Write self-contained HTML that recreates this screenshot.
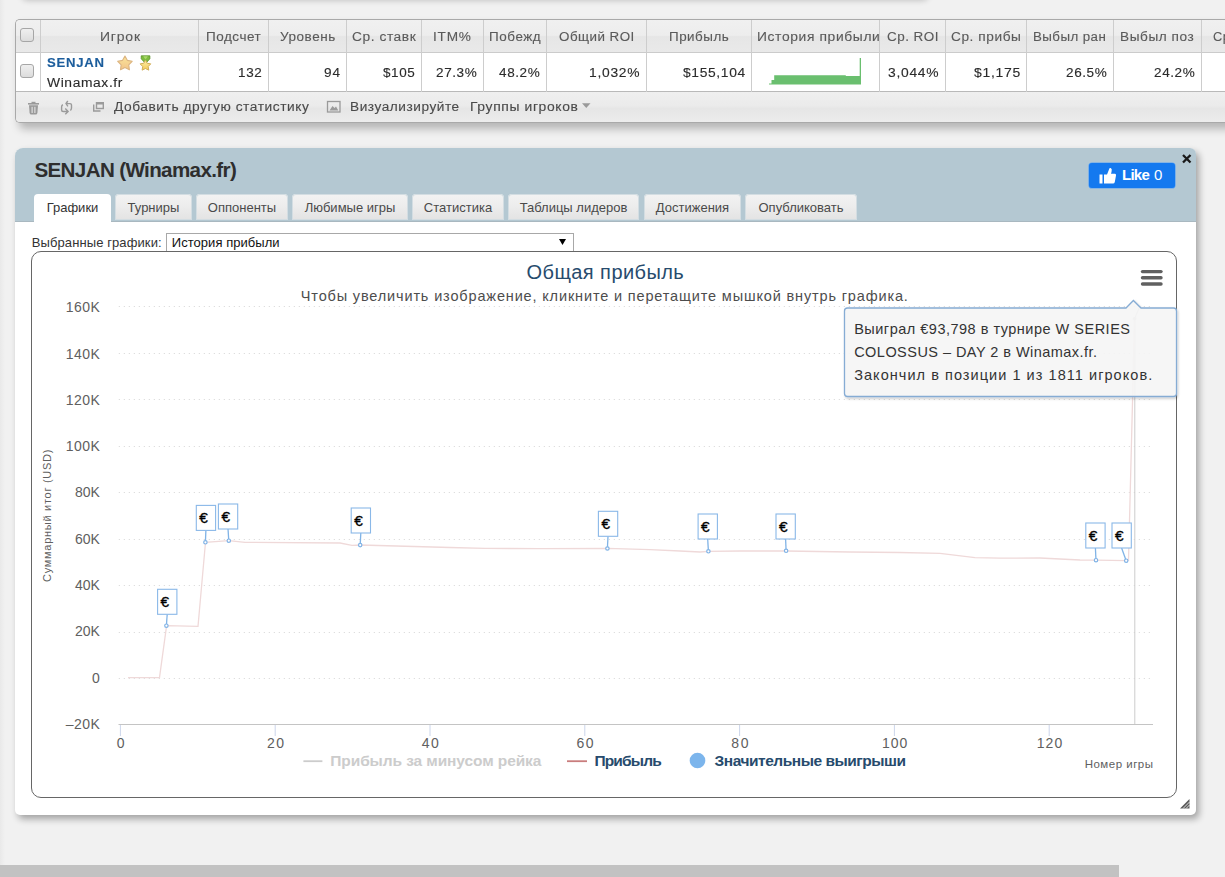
<!DOCTYPE html>
<html><head><meta charset="utf-8"><title>SENJAN (Winamax.fr)</title>
<style>
html,body{margin:0;padding:0}
body{width:1225px;height:877px;overflow:hidden;position:relative;background:#f1f1f1;font-family:"Liberation Sans",sans-serif}
.abs{position:absolute}
.t{position:absolute;white-space:pre}
#lstrip{left:0;top:0;width:5px;height:877px;background:linear-gradient(90deg,#e9e9e9,#f1f1f1)}
#topbox{left:21px;top:-30px;width:906px;height:28px;background:#f1f1f1;border-radius:0 0 5px 5px;box-shadow:1px 2px 6px rgba(0,0,0,.24)}
#tbl{left:15px;top:19px;width:1230px;height:102px;border:1px solid #a9a9a9;border-right:0;border-radius:5px 0 0 5px;background:#ececec;box-shadow:4px 6px 8px rgba(0,0,0,.25);overflow:hidden}
#thead{left:0;top:0;width:100%;height:32px;background:linear-gradient(#f0f0f0 0%,#ededed 48%,#e6e6e6 52%,#e9e9e9 100%);border-bottom:1px solid #cbcbcb}
#tbody{left:0;top:33px;width:100%;height:38px;background:#fff;border-bottom:1px solid #b9b9b9}
#tbar{left:0;top:72px;width:100%;height:30px;background:linear-gradient(#efefef 0%,#ebebeb 45%,#e6e6e6 55%,#ececec 100%)}
.vd{position:absolute;top:0;width:1px;height:72px;background:#cdcdcd}
.cb{position:absolute;width:12px;height:12px;border:1px solid #a6a6a6;border-radius:3px;background:linear-gradient(#efefef,#dcdcdc)}
#panel{left:15px;top:148px;width:1181px;height:667px;background:#fff;border-radius:8px 6px 5px 5px;box-shadow:3px 4px 7px rgba(0,0,0,.33)}
#phead{left:0;top:0;width:1181px;height:74px;background:#b4c8d2;border-radius:8px 6px 0 0;box-shadow:inset 0 -1px 0 #a9b8c0}
.tab{position:absolute;top:193.5px;height:26.5px;border-radius:4px 4px 0 0;background:linear-gradient(#f3f3f3 0%,#ececec 50%,#e3e3e3 100%);box-shadow:inset 0 0 0 1px #d3dde2}
.tab.on{background:#fff;height:28.5px;box-shadow:none}
#sel{left:166px;top:233px;width:408px;height:18px;border:1px solid #a8a8a8;border-bottom:0;background:#fff;box-sizing:border-box}
#chartbox{left:30.8px;top:251px;width:1146.4px;height:547px;border:1.8px solid #666;border-radius:10px;box-sizing:border-box;background:#fff}
#likebtn{left:1089px;top:163px;width:86px;height:25px;background:#1479ef;border-radius:3px;box-shadow:0 0 0 0.6px #5aa2f5}
#botbar{left:0;top:865px;width:1119px;height:12px;background:#c2c2c2}
</style></head><body>
<div id="lstrip" class="abs"></div>
<div id="topbox" class="abs"></div>
<div id="tbl" class="abs">
  <div id="thead" class="abs"></div>
  <div id="tbody" class="abs"></div>
  <div id="tbar" class="abs"></div>
  <div class="vd" style="left:24px"></div><div class="vd" style="left:182px"></div><div class="vd" style="left:252px"></div><div class="vd" style="left:330px"></div><div class="vd" style="left:405px"></div><div class="vd" style="left:467px"></div><div class="vd" style="left:530px"></div><div class="vd" style="left:630px"></div><div class="vd" style="left:735px"></div><div class="vd" style="left:863px"></div><div class="vd" style="left:929px"></div><div class="vd" style="left:1010px"></div><div class="vd" style="left:1097px"></div><div class="vd" style="left:1185px"></div>
  <div class="cb" style="left:4px;top:8px"></div>
  <div class="cb" style="left:4px;top:44px"></div>
</div>
<svg class="abs" width="1225" height="140" style="left:0;top:0">
  <!-- sparkline -->
  <path d="M769,84.5 L769,83.5 L771.5,83.5 L771.5,80 L774.2,80 L774.2,75.2 L845.8,75.2 L845.8,76.1 L859.7,76.1 L859.7,58.1 L861,58.1 L861,84.5 Z" fill="#6abf6f"/>
  <!-- stars -->
  <defs><linearGradient id="sg1" x1="0" y1="0" x2="0" y2="1"><stop offset="0" stop-color="#fbe59a"/><stop offset="1" stop-color="#f2c489"/></linearGradient>
  <linearGradient id="sg2" x1="0" y1="0" x2="0" y2="1"><stop offset="0" stop-color="#fdf0a8"/><stop offset="1" stop-color="#f3c95a"/></linearGradient></defs>
  <polygon points="124.95,56.00 127.30,60.36 132.18,61.25 128.75,64.84 129.42,69.75 124.95,67.60 120.48,69.75 121.15,64.84 117.72,61.25 122.60,60.36" fill="url(#sg1)" stroke="#dcb582" stroke-width="1.1" stroke-linejoin="round"/>
  <path d="M141.2,55.8 L149.9,55.8 L149.9,58.8 L146.5,62.5 L144.6,62.5 L141.2,58.8 Z" fill="#7cbc3e" stroke="#4f8a1e" stroke-width="0.7" stroke-linejoin="round"/><path d="M143.2,56.2 L147.9,56.2 L145.55,59.5 Z" fill="#a8d86a"/>
  <polygon points="145.45,60.00 147.15,63.25 150.78,63.87 148.21,66.50 148.74,70.13 145.45,68.50 142.16,70.13 142.69,66.50 140.12,63.87 143.75,63.25" fill="url(#sg2)" stroke="#d2ae5a" stroke-width="1" stroke-linejoin="round"/>
  <!-- toolbar icons -->
  <g fill="#9a9a9a">
    <rect x="28" y="103" width="11" height="1.6"/>
    <rect x="31.5" y="101.8" width="4" height="1.6"/>
    <path d="M29,105.3 L38,105.3 L37.4,113 Q37.2,114.6 35.6,114.6 L31.4,114.6 Q29.8,114.6 29.6,113 Z"/>
  </g>
  <g stroke="#ececec" stroke-width="1"><line x1="32.1" y1="106.8" x2="32.1" y2="113"/><line x1="34.9" y1="106.8" x2="34.9" y2="113"/></g>
  <g fill="none" stroke="#9a9a9a" stroke-width="1.4">
    <path d="M62.8,104.6 Q61.6,105.6 61.6,107 L61.6,110 Q61.6,111.5 63.1,111.5 L67.6,111.5 M65.3,108.6 L68.1,111.5 L65.3,114.3"/>
    <path d="M70.4,110.4 Q71.5,109.4 71.5,108 L71.5,105 Q71.5,103.6 70,103.6 L66.2,103.6 M67.8,101 L66,103.6 L67.9,106.3"/>
  </g>
  <g fill="none" stroke="#9a9a9a" stroke-width="1.4">
    <path d="M93.7,104.5 L93.7,111 L100.5,111"/>
    <rect x="96.5" y="102.7" width="6.8" height="5.8"/>
  </g>
  <rect x="96.5" y="102.5" width="7" height="2" fill="#9a9a9a"/>
  <rect x="327.5" y="101.5" width="12.5" height="10.5" fill="none" stroke="#9a9a9a" stroke-width="1.3"/>
  <path d="M329.5,110.5 L332.5,106 L334.5,108 L336,106.5 L338.3,110.5 Z" fill="#9a9a9a"/>
  <path d="M582,103.3 L590.5,103.3 L586.25,108 Z" fill="#9a9a9a"/>
</svg>
<div id="panel" class="abs">
  <div id="phead" class="abs"></div>
</div>
<div class="abs tab on" style="left:34px;width:77px"></div><div class="abs tab" style="left:115px;width:77px"></div><div class="abs tab" style="left:196px;width:92px"></div><div class="abs tab" style="left:292px;width:116px"></div><div class="abs tab" style="left:412px;width:92px"></div><div class="abs tab" style="left:508px;width:131px"></div><div class="abs tab" style="left:644px;width:97px"></div><div class="abs tab" style="left:745px;width:112px"></div>
<div id="sel" class="abs"></div>
<div id="chartbox" class="abs"></div>
<div id="likebtn" class="abs"></div>
<svg class="abs" width="1225" height="877" style="left:0;top:0">
  <path d="M1183,155 L1190.5,162.5 M1190.5,155 L1183,162.5" stroke="#1a1a1a" stroke-width="2.3"/>
  <path d="M559,239 L566,239 L562.5,245 Z" fill="#000"/>
  <!-- like thumb -->
  <path d="M1099.5,174.5 L1102.5,174.5 L1102.5,183.5 L1099.5,183.5 Z M1104,174.5 L1107,174.5 L1109,169.5 Q1109.5,167.5 1111,168.3 Q1112.3,169 1111.5,172 L1111,173.8 L1115,173.8 Q1116.3,174 1116,175.5 L1114.8,182 Q1114.5,183.5 1113,183.5 L1104,183.5 Z" fill="#fff"/>
  <!-- resize handle -->
  <path d="M1180,808.5 L1189.5,799 L1189.5,808.5 Z" fill="#5a5a5a"/>
  <g stroke="#fff" stroke-width="0.8"><line x1="1183" y1="808.5" x2="1189.5" y2="802"/><line x1="1186" y1="808.5" x2="1189.5" y2="805"/></g>
  <line x1="118.8" y1="306.5" x2="1150" y2="306.5" stroke="#d6d6d6" stroke-width="1" stroke-dasharray="1,4"/>
<line x1="118.8" y1="353.5" x2="1150" y2="353.5" stroke="#d6d6d6" stroke-width="1" stroke-dasharray="1,4"/>
<line x1="118.8" y1="399.5" x2="1150" y2="399.5" stroke="#d6d6d6" stroke-width="1" stroke-dasharray="1,4"/>
<line x1="118.8" y1="446.5" x2="1150" y2="446.5" stroke="#d6d6d6" stroke-width="1" stroke-dasharray="1,4"/>
<line x1="118.8" y1="492.5" x2="1150" y2="492.5" stroke="#d6d6d6" stroke-width="1" stroke-dasharray="1,4"/>
<line x1="118.8" y1="539.5" x2="1150" y2="539.5" stroke="#d6d6d6" stroke-width="1" stroke-dasharray="1,4"/>
<line x1="118.8" y1="585.5" x2="1150" y2="585.5" stroke="#d6d6d6" stroke-width="1" stroke-dasharray="1,4"/>
<line x1="118.8" y1="632.5" x2="1150" y2="632.5" stroke="#d6d6d6" stroke-width="1" stroke-dasharray="1,4"/>
<line x1="118.8" y1="678.5" x2="1150" y2="678.5" stroke="#d6d6d6" stroke-width="1" stroke-dasharray="1,4"/>
<line x1="118.5" y1="724.5" x2="1153" y2="724.5" stroke="#c4c4c4" stroke-width="1"/>
<line x1="120.4" y1="725" x2="120.4" y2="736" stroke="#ccd6eb" stroke-width="1"/>
<line x1="275.2" y1="725" x2="275.2" y2="736" stroke="#ccd6eb" stroke-width="1"/>
<line x1="430.0" y1="725" x2="430.0" y2="736" stroke="#ccd6eb" stroke-width="1"/>
<line x1="584.8" y1="725" x2="584.8" y2="736" stroke="#ccd6eb" stroke-width="1"/>
<line x1="739.6" y1="725" x2="739.6" y2="736" stroke="#ccd6eb" stroke-width="1"/>
<line x1="894.4" y1="725" x2="894.4" y2="736" stroke="#ccd6eb" stroke-width="1"/>
<line x1="1049.2" y1="725" x2="1049.2" y2="736" stroke="#ccd6eb" stroke-width="1"/>
<line x1="1134.8" y1="318" x2="1134.8" y2="724" stroke="#cccccc" stroke-width="1"/>
<polyline fill="none" stroke="#efd9d9" stroke-width="1.3" points="128.0,677.7 159.5,677.5 166.6,625.6 198.0,626.4 205.5,542.3 228.8,540.7 245.0,542.3 340.0,543.0 352.0,545.3 360.3,545.0 450.0,547.5 485.0,548.4 540.0,548.6 607.4,548.4 650.0,549.6 680.0,551.0 700.0,552.0 708.4,551.4 740.0,551.0 786.0,551.0 850.0,552.0 900.0,552.5 940.0,553.4 975.0,557.6 1000.0,558.2 1040.0,558.0 1080.0,560.0 1096.0,560.2 1126.4,560.7 1128.5,560.5 1134.6,318.7"/>
<line x1="167.2" y1="614.3" x2="166.4" y2="625.7" stroke="#80b3e6" stroke-width="1.3"/>
<circle cx="166.4" cy="625.7" r="1.7" fill="#fff" stroke="#80b3e6" stroke-width="1.2"/>
<rect x="157.6" y="589.3" width="19.3" height="25" fill="#fff" stroke="#8ab8e8" stroke-width="1.1"/>
<text x="160.6" y="606.9" font-family="Liberation Sans" font-weight="400" font-size="15.5" fill="#000" stroke="#000" stroke-width="0.35">€</text>
<line x1="205.9" y1="530.4" x2="205.4" y2="542.3" stroke="#80b3e6" stroke-width="1.3"/>
<circle cx="205.4" cy="542.3" r="1.7" fill="#fff" stroke="#80b3e6" stroke-width="1.2"/>
<rect x="196.3" y="505.4" width="19.3" height="25" fill="#fff" stroke="#8ab8e8" stroke-width="1.1"/>
<text x="199.3" y="523.0" font-family="Liberation Sans" font-weight="400" font-size="15.5" fill="#000" stroke="#000" stroke-width="0.35">€</text>
<line x1="228.0" y1="529.0" x2="228.8" y2="540.7" stroke="#80b3e6" stroke-width="1.3"/>
<circle cx="228.8" cy="540.7" r="1.7" fill="#fff" stroke="#80b3e6" stroke-width="1.2"/>
<rect x="218.4" y="504.0" width="19.3" height="25" fill="#fff" stroke="#8ab8e8" stroke-width="1.1"/>
<text x="221.4" y="521.6" font-family="Liberation Sans" font-weight="400" font-size="15.5" fill="#000" stroke="#000" stroke-width="0.35">€</text>
<line x1="360.8" y1="533.0" x2="360.2" y2="545.1" stroke="#80b3e6" stroke-width="1.3"/>
<circle cx="360.2" cy="545.1" r="1.7" fill="#fff" stroke="#80b3e6" stroke-width="1.2"/>
<rect x="351.2" y="508.0" width="19.3" height="25" fill="#fff" stroke="#8ab8e8" stroke-width="1.1"/>
<text x="354.2" y="525.6" font-family="Liberation Sans" font-weight="400" font-size="15.5" fill="#000" stroke="#000" stroke-width="0.35">€</text>
<line x1="608.0" y1="536.3" x2="607.4" y2="548.5" stroke="#80b3e6" stroke-width="1.3"/>
<circle cx="607.4" cy="548.5" r="1.7" fill="#fff" stroke="#80b3e6" stroke-width="1.2"/>
<rect x="598.4" y="511.3" width="19.3" height="25" fill="#fff" stroke="#8ab8e8" stroke-width="1.1"/>
<text x="601.4" y="528.9" font-family="Liberation Sans" font-weight="400" font-size="15.5" fill="#000" stroke="#000" stroke-width="0.35">€</text>
<line x1="707.7" y1="539.0" x2="708.4" y2="551.3" stroke="#80b3e6" stroke-width="1.3"/>
<circle cx="708.4" cy="551.3" r="1.7" fill="#fff" stroke="#80b3e6" stroke-width="1.2"/>
<rect x="698.1" y="514.0" width="19.3" height="25" fill="#fff" stroke="#8ab8e8" stroke-width="1.1"/>
<text x="701.1" y="531.6" font-family="Liberation Sans" font-weight="400" font-size="15.5" fill="#000" stroke="#000" stroke-width="0.35">€</text>
<line x1="785.6" y1="539.0" x2="786.1" y2="550.8" stroke="#80b3e6" stroke-width="1.3"/>
<circle cx="786.1" cy="550.8" r="1.7" fill="#fff" stroke="#80b3e6" stroke-width="1.2"/>
<rect x="776.0" y="514.0" width="19.3" height="25" fill="#fff" stroke="#8ab8e8" stroke-width="1.1"/>
<text x="779.0" y="531.6" font-family="Liberation Sans" font-weight="400" font-size="15.5" fill="#000" stroke="#000" stroke-width="0.35">€</text>
<line x1="1095.4" y1="548.0" x2="1096.0" y2="560.2" stroke="#80b3e6" stroke-width="1.3"/>
<circle cx="1096.0" cy="560.2" r="1.7" fill="#fff" stroke="#80b3e6" stroke-width="1.2"/>
<rect x="1085.8" y="523.0" width="19.3" height="25" fill="#fff" stroke="#8ab8e8" stroke-width="1.1"/>
<text x="1088.8" y="540.6" font-family="Liberation Sans" font-weight="400" font-size="15.5" fill="#000" stroke="#000" stroke-width="0.35">€</text>
<line x1="1121.6" y1="548.0" x2="1126.2" y2="560.7" stroke="#80b3e6" stroke-width="1.3"/>
<circle cx="1126.2" cy="560.7" r="1.7" fill="#fff" stroke="#80b3e6" stroke-width="1.2"/>
<rect x="1112.0" y="523.0" width="19.3" height="25" fill="#fff" stroke="#8ab8e8" stroke-width="1.1"/>
<text x="1115.0" y="540.6" font-family="Liberation Sans" font-weight="400" font-size="15.5" fill="#000" stroke="#000" stroke-width="0.35">€</text>
<line x1="1140" y1="306" x2="1134.6" y2="318.7" stroke="#c8c8c8" stroke-width="1"/>
<circle cx="1134.6" cy="318.7" r="1.8" fill="#c8c8c8"/>
<line x1="303.4" y1="761.2" x2="322.4" y2="761.2" stroke="#cccccc" stroke-width="1.8"/>
<line x1="567" y1="761.2" x2="587" y2="761.2" stroke="#c97d7d" stroke-width="1.8"/>
<circle cx="697.5" cy="760.5" r="7.8" fill="#7cb5ec"/>
<line x1="1142.5" y1="271.6" x2="1161" y2="271.6" stroke="#606060" stroke-width="3.4" stroke-linecap="round"/>
<line x1="1142.5" y1="277.8" x2="1161" y2="277.8" stroke="#606060" stroke-width="3.4" stroke-linecap="round"/>
<line x1="1142.5" y1="284" x2="1161" y2="284" stroke="#606060" stroke-width="3.4" stroke-linecap="round"/>
</svg>
<div class="t" style="left:42px;top:581.6px;font-size:11px;line-height:11px;color:#606060;transform-origin:0 0;transform:rotate(-90deg);letter-spacing:0.72px">Суммарный итог (USD)</div>
<svg class="abs" width="1225" height="877" style="left:0;top:0">
<defs><filter id="tsh" x="-10%" y="-10%" width="130%" height="140%"><feDropShadow dx="1" dy="1.5" stdDeviation="1.3" flood-color="#000" flood-opacity="0.22"/></filter></defs>
<path d="M847.5,308 L1126,308 L1133.4,300.5 L1141,308 L1173.5,308 Q1176.5,308 1176.5,311 L1176.5,393.5 Q1176.5,396.5 1173.5,396.5 L847.5,396.5 Q844.5,396.5 844.5,393.5 L844.5,311 Q844.5,308 847.5,308 Z" fill="rgba(247,247,247,0.9)" stroke="#86acd4" stroke-width="1.3" filter="url(#tsh)"/>
</svg>
<div class="t" style="left:99.60px;top:31.02px;font-size:12.5px;line-height:12.5px;color:#5a5a5a;letter-spacing:0.712px;transform-origin:0 0;transform:scaleX(1.1182);-webkit-text-stroke:0.12px #5a5a5a;">Игрок</div>
<div class="t" style="left:206.00px;top:31.02px;font-size:12.5px;line-height:12.5px;color:#5a5a5a;letter-spacing:0.483px;transform-origin:0 0;transform:scaleX(1.0800);-webkit-text-stroke:0.12px #5a5a5a;">Подсчет</div>
<div class="t" style="left:279.90px;top:31.02px;font-size:12.5px;line-height:12.5px;color:#5a5a5a;letter-spacing:0.489px;transform-origin:0 0;transform:scaleX(1.0804);-webkit-text-stroke:0.12px #5a5a5a;">Уровень</div>
<div class="t" style="left:352.20px;top:31.02px;font-size:12.5px;line-height:12.5px;color:#5a5a5a;letter-spacing:0.504px;transform-origin:0 0;transform:scaleX(1.1009);-webkit-text-stroke:0.12px #5a5a5a;">Ср. ставк</div>
<div class="t" style="left:433.40px;top:31.02px;font-size:12.5px;line-height:12.5px;color:#5a5a5a;letter-spacing:0.737px;transform-origin:0 0;transform:scaleX(1.0903);-webkit-text-stroke:0.12px #5a5a5a;">ITM%</div>
<div class="t" style="left:489.40px;top:31.02px;font-size:12.5px;line-height:12.5px;color:#5a5a5a;letter-spacing:0.524px;transform-origin:0 0;transform:scaleX(1.0758);-webkit-text-stroke:0.12px #5a5a5a;">Побежд</div>
<div class="t" style="left:558.90px;top:31.02px;font-size:12.5px;line-height:12.5px;color:#5a5a5a;letter-spacing:0.445px;transform-origin:0 0;transform:scaleX(1.0697);-webkit-text-stroke:0.12px #5a5a5a;">Общий ROI</div>
<div class="t" style="left:669.30px;top:31.02px;font-size:12.5px;line-height:12.5px;color:#5a5a5a;letter-spacing:0.478px;transform-origin:0 0;transform:scaleX(1.0710);-webkit-text-stroke:0.12px #5a5a5a;">Прибыль</div>
<div class="t" style="left:757.00px;top:31.02px;font-size:12.5px;line-height:12.5px;color:#5a5a5a;letter-spacing:0.574px;transform-origin:0 0;transform:scaleX(1.1052);-webkit-text-stroke:0.12px #5a5a5a;width:117.0px;overflow:hidden;">История прибыли</div>
<div class="t" style="left:886.90px;top:31.02px;font-size:12.5px;line-height:12.5px;color:#5a5a5a;letter-spacing:0.442px;transform-origin:0 0;transform:scaleX(1.0773);-webkit-text-stroke:0.12px #5a5a5a;">Ср. ROI</div>
<div class="t" style="left:951.20px;top:31.02px;font-size:12.5px;line-height:12.5px;color:#5a5a5a;letter-spacing:0.521px;transform-origin:0 0;transform:scaleX(1.0931);-webkit-text-stroke:0.12px #5a5a5a;">Ср. прибы</div>
<div class="t" style="left:1032.60px;top:31.02px;font-size:12.5px;line-height:12.5px;color:#5a5a5a;letter-spacing:0.409px;transform-origin:0 0;transform:scaleX(1.0656);-webkit-text-stroke:0.12px #5a5a5a;width:76.4px;overflow:hidden;">Выбыл ран</div>
<div class="t" style="left:1119.60px;top:31.02px;font-size:12.5px;line-height:12.5px;color:#5a5a5a;letter-spacing:0.530px;transform-origin:0 0;transform:scaleX(1.0887);-webkit-text-stroke:0.12px #5a5a5a;width:76.9px;overflow:hidden;">Выбыл поз</div>
<div class="t" style="left:1213.00px;top:31.02px;font-size:12.5px;line-height:12.5px;color:#5a5a5a;letter-spacing:0.357px;transform-origin:0 0;transform:scaleX(1.0281);-webkit-text-stroke:0.12px #5a5a5a;">Ср</div>
<div class="t" style="left:238.20px;top:67.22px;font-size:12.5px;line-height:12.5px;color:#2b2b2b;letter-spacing:0.614px;transform-origin:0 0;transform:scaleX(1.0775);-webkit-text-stroke:0.12px #2b2b2b;">132</div>
<div class="t" style="left:323.80px;top:67.22px;font-size:12.5px;line-height:12.5px;color:#2b2b2b;letter-spacing:0.908px;transform-origin:0 0;transform:scaleX(1.0868);-webkit-text-stroke:0.12px #2b2b2b;">94</div>
<div class="t" style="left:382.70px;top:67.22px;font-size:12.5px;line-height:12.5px;color:#2b2b2b;letter-spacing:0.554px;transform-origin:0 0;transform:scaleX(1.0789);-webkit-text-stroke:0.12px #2b2b2b;">$105</div>
<div class="t" style="left:435.70px;top:67.22px;font-size:12.5px;line-height:12.5px;color:#2b2b2b;letter-spacing:0.555px;transform-origin:0 0;transform:scaleX(1.0829);-webkit-text-stroke:0.12px #2b2b2b;">27.3%</div>
<div class="t" style="left:498.90px;top:67.22px;font-size:12.5px;line-height:12.5px;color:#2b2b2b;letter-spacing:0.555px;transform-origin:0 0;transform:scaleX(1.0829);-webkit-text-stroke:0.12px #2b2b2b;">48.2%</div>
<div class="t" style="left:589.10px;top:67.22px;font-size:12.5px;line-height:12.5px;color:#2b2b2b;letter-spacing:0.667px;transform-origin:0 0;transform:scaleX(1.1063);-webkit-text-stroke:0.12px #2b2b2b;">1,032%</div>
<div class="t" style="left:682.90px;top:67.22px;font-size:12.5px;line-height:12.5px;color:#2b2b2b;letter-spacing:0.585px;transform-origin:0 0;transform:scaleX(1.1061);-webkit-text-stroke:0.12px #2b2b2b;">$155,104</div>
<div class="t" style="left:887.90px;top:67.22px;font-size:12.5px;line-height:12.5px;color:#2b2b2b;letter-spacing:0.667px;transform-origin:0 0;transform:scaleX(1.1063);-webkit-text-stroke:0.12px #2b2b2b;">3,044%</div>
<div class="t" style="left:974.00px;top:67.22px;font-size:12.5px;line-height:12.5px;color:#2b2b2b;letter-spacing:0.650px;transform-origin:0 0;transform:scaleX(1.1160);-webkit-text-stroke:0.12px #2b2b2b;">$1,175</div>
<div class="t" style="left:1066.20px;top:67.22px;font-size:12.5px;line-height:12.5px;color:#2b2b2b;letter-spacing:0.555px;transform-origin:0 0;transform:scaleX(1.0829);-webkit-text-stroke:0.12px #2b2b2b;">26.5%</div>
<div class="t" style="left:1154.00px;top:67.22px;font-size:12.5px;line-height:12.5px;color:#2b2b2b;letter-spacing:0.555px;transform-origin:0 0;transform:scaleX(1.0829);-webkit-text-stroke:0.12px #2b2b2b;">24.2%</div>
<div class="t" style="left:46.50px;top:56.84px;font-size:12px;line-height:12px;color:#1c5d9c;font-weight:700;letter-spacing:0.684px;transform-origin:0 0;transform:scaleX(1.0939);-webkit-text-stroke:0.12px #1c5d9c;">SENJAN</div>
<div class="t" style="left:46.70px;top:77.02px;font-size:12.5px;line-height:12.5px;color:#2b2b2b;letter-spacing:0.551px;transform-origin:0 0;transform:scaleX(1.1061);-webkit-text-stroke:0.12px #2b2b2b;">Winamax.fr</div>
<div class="t" style="left:114.00px;top:100.92px;font-size:12.5px;line-height:12.5px;color:#4a4a4a;letter-spacing:0.491px;transform-origin:0 0;transform:scaleX(1.1003);-webkit-text-stroke:0.12px #4a4a4a;">Добавить другую статистику</div>
<div class="t" style="left:349.60px;top:100.92px;font-size:12.5px;line-height:12.5px;color:#4a4a4a;letter-spacing:0.496px;transform-origin:0 0;transform:scaleX(1.0920);-webkit-text-stroke:0.12px #4a4a4a;">Визуализируйте</div>
<div class="t" style="left:470.30px;top:100.92px;font-size:12.5px;line-height:12.5px;color:#4a4a4a;letter-spacing:0.565px;transform-origin:0 0;transform:scaleX(1.1110);-webkit-text-stroke:0.12px #4a4a4a;">Группы игроков</div>
<div class="t" style="left:34.40px;top:160.36px;font-size:20.6px;line-height:20.6px;color:#2e2e2e;font-weight:700;letter-spacing:-0.634px;">SENJAN (Winamax.fr)</div>
<div class="t" style="left:46.66px;top:201.00px;font-size:13px;line-height:13px;color:#333;">Графики</div>
<div class="t" style="left:127.59px;top:201.00px;font-size:13px;line-height:13px;color:#4a4a4a;">Турниры</div>
<div class="t" style="left:207.84px;top:201.00px;font-size:13px;line-height:13px;color:#4a4a4a;">Оппоненты</div>
<div class="t" style="left:304.65px;top:201.00px;font-size:13px;line-height:13px;color:#4a4a4a;">Любимые игры</div>
<div class="t" style="left:423.86px;top:201.00px;font-size:13px;line-height:13px;color:#4a4a4a;">Статистика</div>
<div class="t" style="left:519.63px;top:201.00px;font-size:13px;line-height:13px;color:#4a4a4a;">Таблицы лидеров</div>
<div class="t" style="left:655.84px;top:201.00px;font-size:13px;line-height:13px;color:#4a4a4a;">Достижения</div>
<div class="t" style="left:758.49px;top:201.00px;font-size:13px;line-height:13px;color:#4a4a4a;">Опубликовать</div>
<div class="t" style="left:31.80px;top:235.80px;font-size:13px;line-height:13px;color:#333;letter-spacing:0.095px;">Выбранные графики:</div>
<div class="t" style="left:171.80px;top:235.80px;font-size:13px;line-height:13px;color:#111;letter-spacing:0.043px;">История прибыли</div>
<div class="t" style="left:1122.00px;top:167.10px;font-size:15px;line-height:15px;color:#fff;font-weight:700;letter-spacing:-0.739px;">Like</div>
<div class="t" style="left:1154.00px;top:167.10px;font-size:15px;line-height:15px;color:#fff;">0</div>
<div class="t" style="left:65.80px;top:300.35px;font-size:14px;line-height:14px;color:#606060;letter-spacing:0.432px;">160K</div>
<div class="t" style="left:65.80px;top:347.35px;font-size:14px;line-height:14px;color:#606060;letter-spacing:0.432px;">140K</div>
<div class="t" style="left:65.80px;top:393.35px;font-size:14px;line-height:14px;color:#606060;letter-spacing:0.432px;">120K</div>
<div class="t" style="left:65.80px;top:439.35px;font-size:14px;line-height:14px;color:#606060;letter-spacing:0.432px;">100K</div>
<div class="t" style="left:74.88px;top:485.35px;font-size:14px;line-height:14px;color:#606060;">80K</div>
<div class="t" style="left:74.88px;top:532.35px;font-size:14px;line-height:14px;color:#606060;">60K</div>
<div class="t" style="left:74.88px;top:578.35px;font-size:14px;line-height:14px;color:#606060;">40K</div>
<div class="t" style="left:74.88px;top:624.35px;font-size:14px;line-height:14px;color:#606060;">20K</div>
<div class="t" style="left:92.00px;top:671.35px;font-size:14px;line-height:14px;color:#606060;">0</div>
<div class="t" style="left:65.80px;top:717.35px;font-size:14px;line-height:14px;color:#606060;letter-spacing:0.432px;">–20K</div>
<div class="t" style="left:116.80px;top:736.45px;font-size:14px;line-height:14px;color:#606060;">0</div>
<div class="t" style="left:266.95px;top:736.45px;font-size:14px;line-height:14px;color:#606060;letter-spacing:1.522px;">20</div>
<div class="t" style="left:421.75px;top:736.45px;font-size:14px;line-height:14px;color:#606060;letter-spacing:1.522px;">40</div>
<div class="t" style="left:576.55px;top:736.45px;font-size:14px;line-height:14px;color:#606060;letter-spacing:1.522px;">60</div>
<div class="t" style="left:731.35px;top:736.45px;font-size:14px;line-height:14px;color:#606060;letter-spacing:1.522px;">80</div>
<div class="t" style="left:882.00px;top:736.45px;font-size:14px;line-height:14px;color:#606060;letter-spacing:1.020px;">100</div>
<div class="t" style="left:1036.80px;top:736.45px;font-size:14px;line-height:14px;color:#606060;letter-spacing:1.020px;">120</div>
<div class="t" style="left:1084.70px;top:759.27px;font-size:11.5px;line-height:11.5px;color:#606060;letter-spacing:0.492px;">Номер игры</div>
<div class="t" style="left:526.50px;top:262.07px;font-size:20px;line-height:20px;color:#274b6d;letter-spacing:0.439px;">Общая прибыль</div>
<div class="t" style="left:300.80px;top:289.03px;font-size:14.5px;line-height:14.5px;color:#4d4d4d;letter-spacing:0.849px;">Чтобы увеличить изображение, кликните и перетащите мышкой внутрь графика.</div>
<div class="t" style="left:330.30px;top:753.18px;font-size:15.5px;line-height:15.5px;color:#cccccc;font-weight:700;letter-spacing:-0.096px;">Прибыль за минусом рейка</div>
<div class="t" style="left:594.40px;top:753.18px;font-size:15.5px;line-height:15.5px;color:#274b6d;font-weight:700;letter-spacing:-0.821px;">Прибыль</div>
<div class="t" style="left:714.60px;top:753.18px;font-size:15.5px;line-height:15.5px;color:#274b6d;font-weight:700;letter-spacing:-0.468px;">Значительные выигрыши</div>
<div class="t" style="left:854.20px;top:321.73px;font-size:14.5px;line-height:14.5px;color:#333;letter-spacing:0.497px;">Выиграл €93,798 в турнире W SERIES</div>
<div class="t" style="left:854.20px;top:344.53px;font-size:14.5px;line-height:14.5px;color:#333;letter-spacing:0.459px;">COLOSSUS – DAY 2 в Winamax.fr.</div>
<div class="t" style="left:854.20px;top:367.53px;font-size:14.5px;line-height:14.5px;color:#333;letter-spacing:1.049px;">Закончил в позиции 1 из 1811 игроков.</div>
<div id="botbar" class="abs"></div>
</body></html>
